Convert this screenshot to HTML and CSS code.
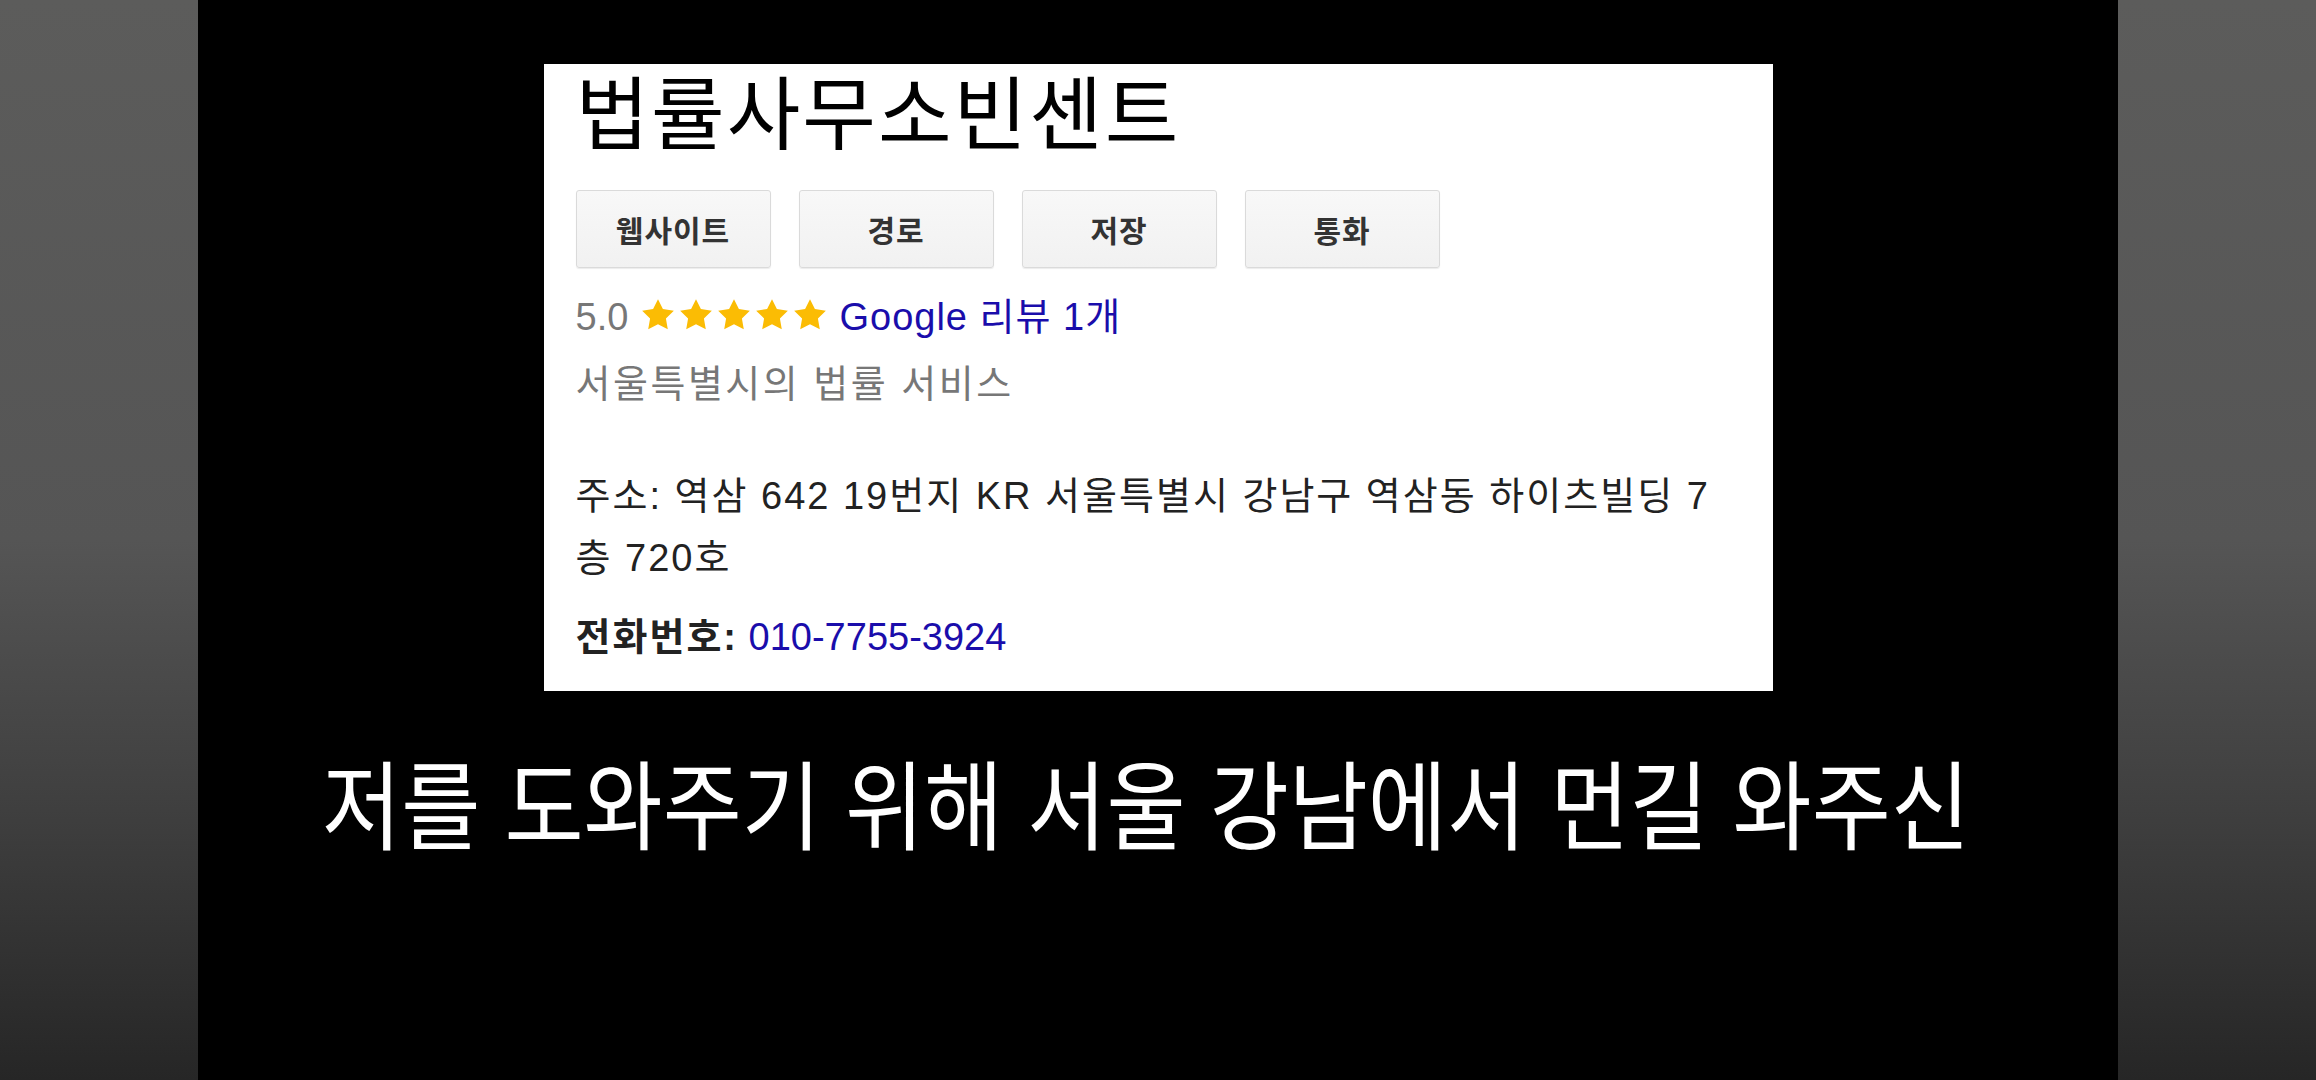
FILE: index.html
```html
<!DOCTYPE html>
<html lang="ko">
<head>
    <meta charset="UTF-8">
    <title>법률사무소빈센트</title>
    <link rel="stylesheet" href="styles.css">
</head>

<body>
    <div class="screen">
        <div class="side"></div>

        <main class="stage">
            <section class="panel">
                <h1 class="panel-title">법률사무소빈센트</h1>

                <div class="actions">
                    <button class="action-btn">웹사이트</button>
                    <button class="action-btn">경로</button>
                    <button class="action-btn">저장</button>
                    <button class="action-btn">통화</button>
                </div>

                <div class="rating">
                    <span class="rating-score">5.0</span>
                    <span class="stars">
                        <svg viewBox="0 0 24 24"><polygon points="12,2 15.09,8.26 22,9.27 17,14.14 18.18,21.02 12,17.77 5.82,21.02 7,14.14 2,9.27 8.91,8.26"/></svg><svg viewBox="0 0 24 24"><polygon points="12,2 15.09,8.26 22,9.27 17,14.14 18.18,21.02 12,17.77 5.82,21.02 7,14.14 2,9.27 8.91,8.26"/></svg><svg viewBox="0 0 24 24"><polygon points="12,2 15.09,8.26 22,9.27 17,14.14 18.18,21.02 12,17.77 5.82,21.02 7,14.14 2,9.27 8.91,8.26"/></svg><svg viewBox="0 0 24 24"><polygon points="12,2 15.09,8.26 22,9.27 17,14.14 18.18,21.02 12,17.77 5.82,21.02 7,14.14 2,9.27 8.91,8.26"/></svg><svg viewBox="0 0 24 24"><polygon points="12,2 15.09,8.26 22,9.27 17,14.14 18.18,21.02 12,17.77 5.82,21.02 7,14.14 2,9.27 8.91,8.26"/></svg>
                    </span>
                    <a class="review-link" href="#">Google 리뷰 1개</a>
                </div>

                <p class="category">서울특별시의 법률 서비스</p>

                <p class="info-line address">주소: 역삼 642 19번지 KR 서울특별시 강남구 역삼동 하이츠빌딩 7층 720호</p>
                <p class="info-line phone"><strong>전화번호:</strong> <a class="phone-link" href="#">010-7755-3924</a></p>
            </section>

            <p class="caption">저를 도와주기 위해 서울 강남에서 먼길 와주신</p>
        </main>

        <div class="side"></div>
    </div>
</body>
</html>
```

FILE: styles.css
```css
* {
    box-sizing: border-box;
}

body {
    margin: 0;
    background-color: #000;
    font-family: "Liberation Sans", Arial, "Noto Sans CJK KR", sans-serif;
}

.screen {
    display: flex;
    width: 2316px;
    height: 1080px;
    overflow: hidden;
}

.side {
    width: 198px;
    flex-shrink: 0;
    background: linear-gradient(to bottom, #5c5c5b 0%, #555 50%, #3f3f3f 75%, #262626 100%);
}

.stage {
    flex: 1;
    display: flex;
    flex-direction: column;
    align-items: center;
    background-color: #000;
}

.panel {
    width: 1229px;
    height: 627px;
    margin-top: 64px;
    padding: 6px 40px 25px 32px;
    background-color: #fff;
    font-size: 38px;
    color: #222;
}

.panel-title {
    margin: 0;
    font-size: 80px;
    font-weight: normal;
    line-height: 92px;
    letter-spacing: 2px;
    color: #000;
}

.actions {
    display: flex;
    gap: 28px;
    margin-top: 28px;
}

.action-btn {
    width: 195px;
    height: 78px;
    padding: 0;
    border: 1px solid #dadada;
    border-radius: 3px;
    background: linear-gradient(to bottom, #f8f8f8, #f1f1f1);
    box-shadow: 0 1px 1px rgba(0, 0, 0, 0.08);
    font-family: "Liberation Sans", Arial, "Noto Sans CJK KR", sans-serif;
    font-size: 30px;
    font-weight: bold;
    letter-spacing: 1px;
    color: #333;
    cursor: pointer;
}

.rating {
    margin-top: 20px;
    line-height: 58px;
    white-space: nowrap;
}

.rating-score {
    color: #777;
}

.stars svg {
    width: 38px;
    height: 38px;
    vertical-align: -4px;
    fill: #fbbc04;
}

.review-link,
.phone-link {
    color: #1a0dab;
    text-decoration: none;
}

.review-link {
    letter-spacing: 1px;
}

.category {
    margin: 9px 0 0;
    line-height: 58px;
    letter-spacing: 2.5px;
    color: #777;
}

.info-line {
    margin: 0;
}

.address {
    margin-top: 52px;
    line-height: 62px;
    letter-spacing: 2px;
}

.phone {
    margin-top: 19px;
    line-height: 58px;
}

.phone strong {
    letter-spacing: 2px;
    color: #222;
}

.caption {
    margin: 60px 24px 0 0;
    font-family: "Noto Sans CJK KR", sans-serif;
    font-size: 86px;
    line-height: 100px;
    color: #fff;
    transform: scaleY(1.12);
}
```
